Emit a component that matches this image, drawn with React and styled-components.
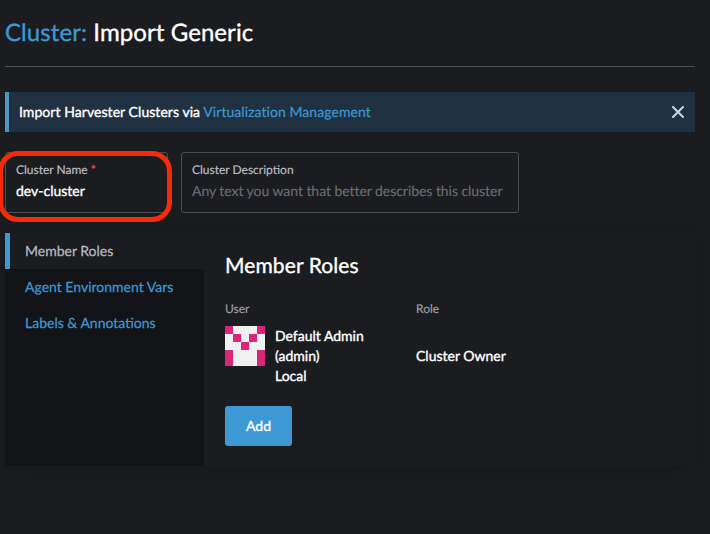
import React from "react";
import styled, { createGlobalStyle } from "styled-components";

const GlobalStyle = createGlobalStyle`
  * { box-sizing: border-box; }
  body {
    margin: 0;
    background: #1b1c20;
    color: #fff;
    font: 400 14px/20px Lato, sans-serif;
    text-rendering: geometricPrecision;
    -webkit-text-stroke: 0.35px currentColor;
  }
`;

const Page = styled.main`
  width: 710px;
  height: 534px;
  padding: 0 15px 0 5px;
  overflow: hidden;
`;

const Header = styled.header`
  height: 67px;
  padding-top: 18px;
  border-bottom: 1px solid #4c4d53;
`;

const Title = styled.h1`
  margin: 0;
  font-size: 24px;
  font-weight: 400;
  line-height: 29px;
  letter-spacing: 0.08px;
  white-space: nowrap;
`;

const Accent = styled.span`
  color: #3d98d3;
`;

const Link = styled.a`
  color: #3d98d3;
  -webkit-text-stroke-width: 0.2px;
`;

const Banner = styled.div`
  display: flex;
  align-items: center;
  justify-content: space-between;
  height: 40px;
  margin-top: 25px;
  padding: 0 11px 0 10px;
  border-left: 4px solid #4a99c9;
  background: #203142;
  letter-spacing: 0.06px;
`;

const CloseButton = styled.button`
  display: flex;
  padding: 0;
  border: 0;
  background: none;
  color: #cbd6dc;
`;

const Fields = styled.div`
  display: flex;
  gap: 13px;
  margin-top: 20px;
`;

const Field = styled.label`
  position: relative;
  display: block;
  width: ${(p) => p.$width}px;
  height: 61px;
  padding: 8px 10px;
  border: 1px solid #4c4d53;
  border-radius: 3px;
  white-space: nowrap;
`;

const FieldLabel = styled.div`
  color: #b9bac2;
  font-size: 12px;
  line-height: 18px;
  -webkit-text-stroke-width: 0.2px;
`;

const Required = styled.span`
  color: #f64747;
`;

const FieldValue = styled.div`
  margin-top: 2px;
  line-height: 20px;
  color: ${(p) => (p.$placeholder ? "#6b6c73" : "#fff")};
  letter-spacing: ${(p) => (p.$placeholder ? -0.05 : 0)}px;
  -webkit-text-stroke-width: ${(p) => (p.$placeholder ? 0.15 : 0.35)}px;
`;

const Highlight = styled.div`
  position: absolute;
  top: -2px;
  left: -8px;
  width: 174px;
  height: 71px;
  border: 5px solid #f42c0a;
  border-radius: 20px;
`;

const Panel = styled.section`
  display: flex;
  height: 233px;
  margin-top: 20px;
  border-radius: 4px;
  box-shadow: 0 0 20px #18191d;
`;

const Tabs = styled.nav`
  width: 199px;
  margin-right: 1px;
  border-radius: 0 0 0 4px;
  background: #131418;
`;

const Tab = styled.div`
  height: 36px;
  padding: 8px 0 8px ${(p) => (p.$active ? 15 : 20)}px;
  border-left: ${(p) => (p.$active ? "5px solid #3d98d3" : "0")};
  background: ${(p) => (p.$active ? "#1b1c20" : "transparent")};
  color: ${(p) => (p.$active ? "#b9bac2" : "#3d98d3")};
  -webkit-text-stroke-width: 0.25px;
`;

const TabContent = styled.div`
  flex: 1;
  padding: 20px;
`;

const SectionTitle = styled.h2`
  margin: 0;
  font-size: 21px;
  font-weight: 400;
  line-height: 25px;
  letter-spacing: 0.1px;
`;

const Members = styled.div`
  display: grid;
  grid-template-columns: 191px 1fr;
  grid-template-rows: 18px 60px;
  row-gap: 8px;
  margin-top: 22px;
`;

const ColumnLabel = styled.div`
  color: #9c9da5;
  font-size: 12px;
  line-height: 18px;
  -webkit-text-stroke-width: 0.2px;
`;

const User = styled.div`
  display: flex;
  gap: 10px;
`;

const UserName = styled.div`
  width: 110px;
`;

const Role = styled.div`
  align-self: center;
`;

const AddButton = styled.button`
  width: 67px;
  height: 40px;
  margin-top: 20px;
  padding: 0;
  border: 0;
  border-radius: 3px;
  background: #3d98d3;
  color: #fff;
  font: inherit;
  -webkit-text-stroke: inherit;
`;

const AVATAR_PIXELS = [[0, 0], [4, 0], [1, 1], [3, 1], [2, 2], [0, 3], [4, 3], [0, 4], [4, 4]];

function Avatar() {
  return (
    <svg width="40" height="40" viewBox="0 0 5 5" shapeRendering="crispEdges">
      <rect width="5" height="5" fill="#f0f0f0" />
      {AVATAR_PIXELS.map(([x, y]) => (
        <rect key={`${x}-${y}`} x={x} y={y} width="1" height="1" fill="#d92678" />
      ))}
    </svg>
  );
}

export default function App() {
  return (
    <>
      <GlobalStyle />
      <Page>
        <Header>
          <Title><Accent>Cluster:</Accent> Import Generic</Title>
        </Header>
        <Banner>
          <span>Import Harvester Clusters via <Link>Virtualization Management</Link></span>
          <CloseButton aria-label="Close">
            <svg width="12" height="12" viewBox="0 0 12 12" fill="none" stroke="currentColor" strokeWidth="2" strokeLinecap="round">
              <path d="M1 1l10 10M11 1L1 11" />
            </svg>
          </CloseButton>
        </Banner>
        <Fields>
          <Field $width={163}>
            <FieldLabel>Cluster Name <Required>*</Required></FieldLabel>
            <FieldValue>dev-cluster</FieldValue>
            <Highlight />
          </Field>
          <Field $width={338}>
            <FieldLabel>Cluster Description</FieldLabel>
            <FieldValue $placeholder>Any text you want that better describes this cluster</FieldValue>
          </Field>
        </Fields>
        <Panel>
          <Tabs>
            <Tab $active>Member Roles</Tab>
            <Tab>Agent Environment Vars</Tab>
            <Tab>Labels &amp; Annotations</Tab>
          </Tabs>
          <TabContent>
            <SectionTitle>Member Roles</SectionTitle>
            <Members>
              <ColumnLabel>User</ColumnLabel>
              <ColumnLabel>Role</ColumnLabel>
              <User>
                <Avatar />
                <UserName>Default Admin (admin)<br />Local</UserName>
              </User>
              <Role>Cluster Owner</Role>
            </Members>
            <AddButton>Add</AddButton>
          </TabContent>
        </Panel>
      </Page>
    </>
  );
}
